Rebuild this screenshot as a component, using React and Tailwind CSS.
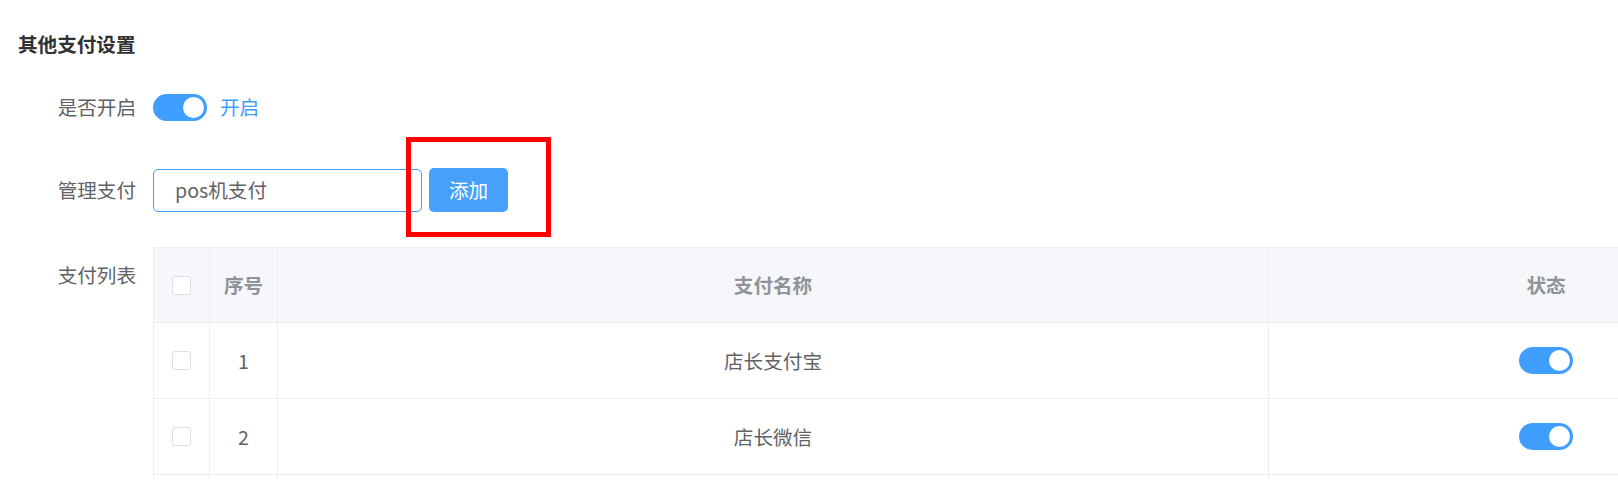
import React from "react";

const font = { fontFamily: '"Noto Sans CJK SC", "Noto Sans", sans-serif' };

function Toggle() {
  return (
    <div className="relative h-[27px] w-[54px] shrink-0 rounded-full bg-[#409eff]">
      <div className="absolute right-[3px] top-[3px] h-[21px] w-[21px] rounded-full bg-white" />
    </div>
  );
}

function Checkbox() {
  return <div className="h-[19px] w-[19px] rounded-[3px] border border-[#dcdfe6] bg-white" />;
}

const rows = [
  { id: 1, name: "店长支付宝" },
  { id: 2, name: "店长微信" },
];

export default function App() {
  return (
    <div
      className="relative h-[480px] w-[1618px] overflow-hidden bg-white text-[19.6px] text-[#606266]"
      style={font}
    >
      <div className="pl-[18px] pt-[30px]">
        <div className="h-[28px] font-bold leading-[28px] text-[#303133]">其他支付设置</div>
      </div>

      <div className="mt-[21px] flex flex-col gap-[27px]">
        <div className="flex h-[56px]">
          <div className="w-[153px] shrink-0 pr-[17px] text-right leading-[56px]">是否开启</div>
          <div className="flex items-center">
            <Toggle />
            <span className="ml-[13px] text-[#409eff]">开启</span>
          </div>
        </div>

        <div className="flex h-[56px]">
          <div className="w-[153px] shrink-0 pr-[17px] text-right leading-[56px]">管理支付</div>
          <div className="flex items-center">
            <div className="flex h-[43px] w-[269px] items-center rounded-[5px] border border-[#409eff] pl-[21px] text-[#606266]">
              pos机支付
            </div>
            <button className="ml-[7px] flex h-[44px] w-[79px] items-center justify-center rounded-[5px] bg-[#46a0fc] text-white">
              添加
            </button>
          </div>
        </div>
      </div>

      <div className="mt-[29px] flex">
        <div className="w-[153px] shrink-0 pr-[17px] text-right leading-[56px]">支付列表</div>
        <div className="w-[1700px] shrink-0 border-l border-t border-[#ebeef5]">
          <div className="flex h-[75px] border-b border-[#ebeef5] bg-[#f5f7fa] font-bold text-[#909399]">
            <div className="flex w-[56px] shrink-0 items-center justify-center border-r border-[#ebeef5]">
              <Checkbox />
            </div>
            <div className="flex w-[68px] shrink-0 items-center justify-center border-r border-[#ebeef5]">序号</div>
            <div className="flex w-[991px] shrink-0 items-center justify-center border-r border-[#ebeef5]">支付名称</div>
            <div className="flex w-[554px] shrink-0 items-center justify-center">状态</div>
          </div>
          {rows.map((r) => (
            <div key={r.id} className="flex h-[76px] border-b border-[#ebeef5]">
              <div className="flex w-[56px] shrink-0 items-center justify-center border-r border-[#ebeef5]">
                <Checkbox />
              </div>
              <div className="flex w-[68px] shrink-0 items-center justify-center border-r border-[#ebeef5]">{r.id}</div>
              <div className="flex w-[991px] shrink-0 items-center justify-center border-r border-[#ebeef5]">{r.name}</div>
              <div className="flex w-[554px] shrink-0 items-center justify-center">
                <Toggle />
              </div>
            </div>
          ))}
          <div className="flex h-[76px]">
            <div className="w-[56px] shrink-0 border-r border-[#ebeef5]" />
            <div className="w-[68px] shrink-0 border-r border-[#ebeef5]" />
            <div className="w-[991px] shrink-0 border-r border-[#ebeef5]" />
            <div className="w-[554px] shrink-0" />
          </div>
        </div>
      </div>

      <div className="absolute left-[406px] top-[137px] h-[100px] w-[145px] border-[5px] border-[#ff0000]" />
    </div>
  );
}
